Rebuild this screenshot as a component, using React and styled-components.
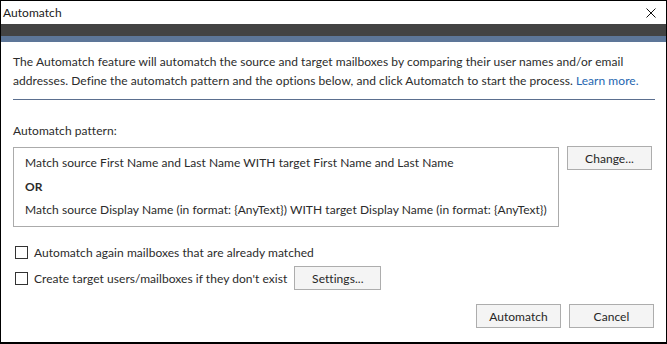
import React from 'react'
import styled, { createGlobalStyle } from 'styled-components'

const Global = createGlobalStyle`
  html, body { margin: 0; padding: 0; background: #fff; }
  body { font-family: Lato, "Liberation Sans", sans-serif; letter-spacing: 0.05px; }
`

const Window = styled.div`
  width: 667px;
  height: 344px;
  box-sizing: border-box;
  border: 1px solid #000;
  border-bottom-width: 2px;
  display: flex;
  flex-direction: column;
  background: #fff;
  color: #2b2b2b;
  font-size: 12px;
`
const TitleBar = styled.div`
  height: 23px;
  display: flex;
  align-items: center;
  justify-content: space-between;
  padding: 0 10px 0 2px;
  font-size: 12px;
  color: #1a1a1a;
`
const CloseIcon = styled.svg`
  width: 10px;
  height: 10px;
`
const Band = styled.div`
  height: ${p => p.h}px;
  background: ${p => p.color};
`
const Content = styled.div`
  flex: 1;
  padding: 10px 11px 0 12px;
  display: flex;
  flex-direction: column;
`
const Description = styled.p`
  margin: 0;
  line-height: 19px;
`
const Link = styled.a`
  color: #2566b0;
  text-decoration: none;
`
const Separator = styled.div`
  height: 1px;
  background: #5b6f8f;
  margin: 9px 0 22px;
`
const Label = styled.div`
  line-height: 18px;
  margin-bottom: 7px;
`
const PatternRow = styled.div`
  display: flex;
  align-items: flex-start;
  gap: 8px;
`
const PatternBox = styled.div`
  width: 546px;
  height: 80px;
  box-sizing: border-box;
  border: 1px solid #ababab;
  padding: 5px 11px 6px;
  display: flex;
  flex-direction: column;
  justify-content: space-between;
`
const PatternLine = styled.div`
  line-height: 20px;
  font-weight: ${p => (p.bold ? 700 : 400)};
`
const Button = styled.button`
  width: ${p => p.w || 85}px;
  height: 24px;
  box-sizing: border-box;
  border: 1px solid #adadad;
  background: #f4f4f4;
  color: #262626;
  font-family: inherit;
  font-size: 12px;
  letter-spacing: inherit;
  padding: 0;
  margin-top: ${p => p.top || 0}px;
`
const Options = styled.div`
  display: flex;
  flex-direction: column;
  gap: 4px;
  margin-top: 15px;
  padding-left: 2px;
`
const CheckRow = styled.label`
  display: flex;
  align-items: center;
  height: ${p => p.h || 20}px;
`
const Box = styled.span`
  width: 13px;
  height: 13px;
  box-sizing: border-box;
  border: 1px solid #333;
  background: #fff;
  margin-right: 6px;
`
const CheckText = styled.span`
  margin-right: 7px;
`
const Footer = styled.div`
  display: flex;
  justify-content: flex-end;
  gap: 8px;
  margin-top: 14px;
  padding-right: 1px;
`

const Check = ({ children, h }) => (
  <CheckRow h={h}>
    <Box />
    {children}
  </CheckRow>
)

const App = () => (
  <Window>
    <Global />
    <TitleBar>
      <span>Automatch</span>
      <CloseIcon viewBox='0 0 10 10'>
        <path d='M0.5 0.5 L9.5 9.5 M9.5 0.5 L0.5 9.5' stroke='#111' strokeWidth='1' fill='none' />
      </CloseIcon>
    </TitleBar>
    <Band h={12} color='#434343' />
    <Band h={6} color='#5d7698' />
    <Content>
      <Description>
        The Automatch feature will automatch the source and target mailboxes by comparing their user names and/or email
        addresses. Define the automatch pattern and the options below, and click Automatch to start the process.{' '}
        <Link href='#'>Learn more.</Link>
      </Description>
      <Separator />
      <Label>Automatch pattern:</Label>
      <PatternRow>
        <PatternBox>
          <PatternLine>Match source First Name and Last Name WITH target First Name and Last Name</PatternLine>
          <PatternLine bold>OR</PatternLine>
          <PatternLine>Match source Display Name (in format: {'{AnyText}'}) WITH target Display Name (in format: {'{AnyText}'})</PatternLine>
        </PatternBox>
        <Button top={-1}>Change...</Button>
      </PatternRow>
      <Options>
        <Check>
          <CheckText>Automatch again mailboxes that are already matched</CheckText>
        </Check>
        <Check h={24}>
          <CheckText>Create target users/mailboxes if they don't exist</CheckText>
          <Button w={87}>Settings...</Button>
        </Check>
      </Options>
      <Footer>
        <Button>Automatch</Button>
        <Button>Cancel</Button>
      </Footer>
    </Content>
  </Window>
)

export default App
